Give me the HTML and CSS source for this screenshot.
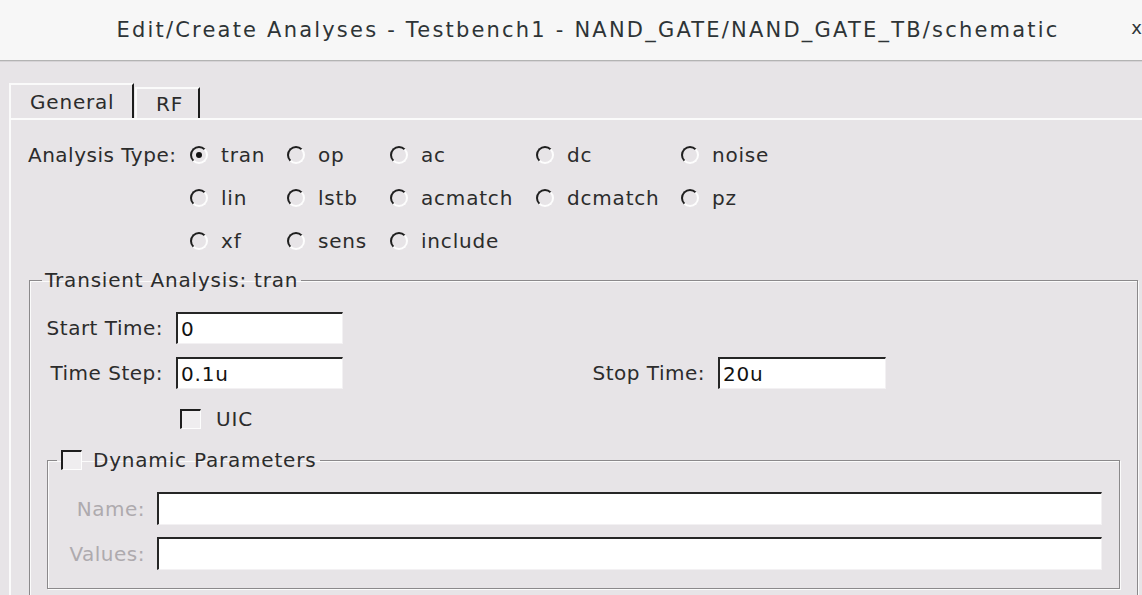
FILE: index.html
```html
<!DOCTYPE html>
<html>
<head>
<meta charset="utf-8">
<link rel="stylesheet" href="styles.css">
</head>
<body>
<div class="window">
  <header class="titlebar">
    <h1 class="title">Edit/Create Analyses - Testbench1 - NAND_GATE/NAND_GATE_TB/schematic</h1>
    <span class="close">x</span>
  </header>
  <main class="dialog">
    <nav class="tabs">
      <span class="tab active">General</span>
      <span class="tab">RF</span>
    </nav>
    <section class="panel">
      <div class="analysis">
        <span class="at-label">Analysis Type:</span>
        <div class="radios">
          <label class="opt"><span class="radio on"></span>tran</label>
          <label class="opt"><span class="radio"></span>op</label>
          <label class="opt"><span class="radio"></span>ac</label>
          <label class="opt"><span class="radio"></span>dc</label>
          <label class="opt"><span class="radio"></span>noise</label>
          <label class="opt"><span class="radio"></span>lin</label>
          <label class="opt"><span class="radio"></span>lstb</label>
          <label class="opt"><span class="radio"></span>acmatch</label>
          <label class="opt"><span class="radio"></span>dcmatch</label>
          <label class="opt"><span class="radio"></span>pz</label>
          <label class="opt"><span class="radio"></span>xf</label>
          <label class="opt"><span class="radio"></span>sens</label>
          <label class="opt"><span class="radio"></span>include</label>
        </div>
      </div>
      <fieldset class="frame transient">
        <legend class="legend">Transient Analysis: tran</legend>
        <div class="times">
          <span class="flabel">Start Time:</span>
          <span class="input">0</span>
          <span></span>
          <span></span>
          <span class="flabel">Time Step:</span>
          <span class="input">0.1u</span>
          <span class="flabel">Stop Time:</span>
          <span class="input">20u</span>
        </div>
        <div class="uic"><span class="check"></span>UIC</div>
        <fieldset class="frame dynamic">
          <legend class="legend dyn-legend"><span class="check"></span>Dynamic Parameters</legend>
          <div class="params">
            <span class="flabel dim">Name:</span>
            <span class="input"></span>
            <span class="flabel dim">Values:</span>
            <span class="input"></span>
          </div>
        </fieldset>
      </fieldset>
    </section>
  </main>
</div>
</body>
</html>
```
FILE: styles.css
```css
html, body {
  margin: 0;
  padding: 0;
}
body {
  width: 1142px;
  height: 595px;
  overflow: hidden;
  background: #e7e4e7;
  font-family: "DejaVu Sans", "Liberation Sans", sans-serif;
  font-size: 20px;
  letter-spacing: 0.8px;
  color: #2c2c2c;
}
.titlebar {
  position: relative;
  height: 60px;
  background: #f7f7f7;
  border-bottom: 1px solid #b3b3b3;
  box-shadow: 0 1px 0 #d6d3d6;
  display: flex;
  align-items: center;
  justify-content: center;
}
.title {
  margin: 0 0 0 34px;
  font-family: "DejaVu Sans", sans-serif;
  font-weight: 400;
  font-size: 21px;
  letter-spacing: 2.2px;
  color: #2e3436;
}
.close {
  position: absolute;
  right: 0;
  top: 17px;
  font-family: "DejaVu Sans", sans-serif;
  font-size: 18px;
  letter-spacing: 0;
  color: #2e3436;
}
.dialog {
  padding: 22px 0 0 9px;
}
.tabs {
  display: flex;
  align-items: flex-end;
  height: 35px;
}
.tab {
  box-sizing: border-box;
  display: flex;
  align-items: center;
  height: 31px;
  border-top: 2px solid #fafafa;
  border-left: 2px solid #fafafa;
  border-right: 2px solid #1c1c1c;
}
.tab.active {
  width: 125px;
  height: 35px;
  padding-left: 19px;
}
.tab:not(.active) {
  width: 65px;
  margin-left: 1px;
  padding-left: 19px;
}
.panel {
  border-top: 2px solid #fbfbfb;
  border-left: 2px solid #fbfbfb;
  padding: 13px 0 0 17px;
}
.analysis {
  display: flex;
}
.at-label {
  width: 162px;
  height: 43px;
  display: flex;
  align-items: center;
  letter-spacing: 0.5px;
}
.radios {
  display: grid;
  grid-template-columns: 97px 103px 146px 145px auto;
  grid-auto-rows: 43px;
}
.opt {
  display: flex;
  align-items: center;
}
.radio {
  box-sizing: border-box;
  width: 18px;
  height: 18px;
  margin-right: 13px;
  border-radius: 50%;
  border: 2px solid;
  border-color: #1e1e1e #fdfdfd #fdfdfd #1e1e1e;
  display: flex;
  align-items: center;
  justify-content: center;
}
.radio.on::after {
  content: "";
  width: 6px;
  height: 6px;
  border-radius: 50%;
  background: #111;
}
.frame {
  border: 1px solid #8b898b;
  box-shadow: inset 1px 1px 0 #fbfbfb, 1px 1px 0 #fbfbfb;
  min-width: 0;
}
.legend {
  padding: 0 3px;
  height: 22px;
  line-height: 22px;
}
.transient {
  margin: 7px 4px 0 1px;
  padding: 21px 0 20px 12px;
}
.times {
  display: grid;
  grid-template-columns: 121px 167px 349px 168px;
  grid-auto-rows: 32px;
  column-gap: 13px;
  row-gap: 13px;
}
.flabel {
  display: flex;
  align-items: center;
  justify-content: flex-end;
  letter-spacing: 0.5px;
}
.dim {
  color: #aeaaae;
}
.input {
  box-sizing: border-box;
  display: flex;
  align-items: center;
  padding-left: 3px;
  background: #fff;
  border-style: solid;
  border-width: 2px 1px 1px 2px;
  border-color: #262626 #f3f1f3 #f3f1f3 #262626;
  color: #111;
}
.uic {
  display: flex;
  align-items: center;
  height: 20px;
  margin-top: 20px;
  padding-left: 138px;
}
.check {
  box-sizing: border-box;
  width: 21px;
  height: 20px;
  margin-right: 15px;
  background: #efedef;
  border-style: solid;
  border-width: 2px 1px 1px 2px;
  border-color: #1e1e1e #fdfdfd #fdfdfd #1e1e1e;
}
.dynamic {
  margin: 20px 17px 0 5px;
  padding: 21px 17px 18px 9px;
}
.dyn-legend {
  display: flex;
  align-items: center;
  padding: 0 4px;
}
.dyn-legend .check {
  margin-right: 11px;
}
.params {
  display: grid;
  grid-template-columns: 88px 1fr;
  grid-auto-rows: 33px;
  column-gap: 12px;
  row-gap: 12px;
}
```
